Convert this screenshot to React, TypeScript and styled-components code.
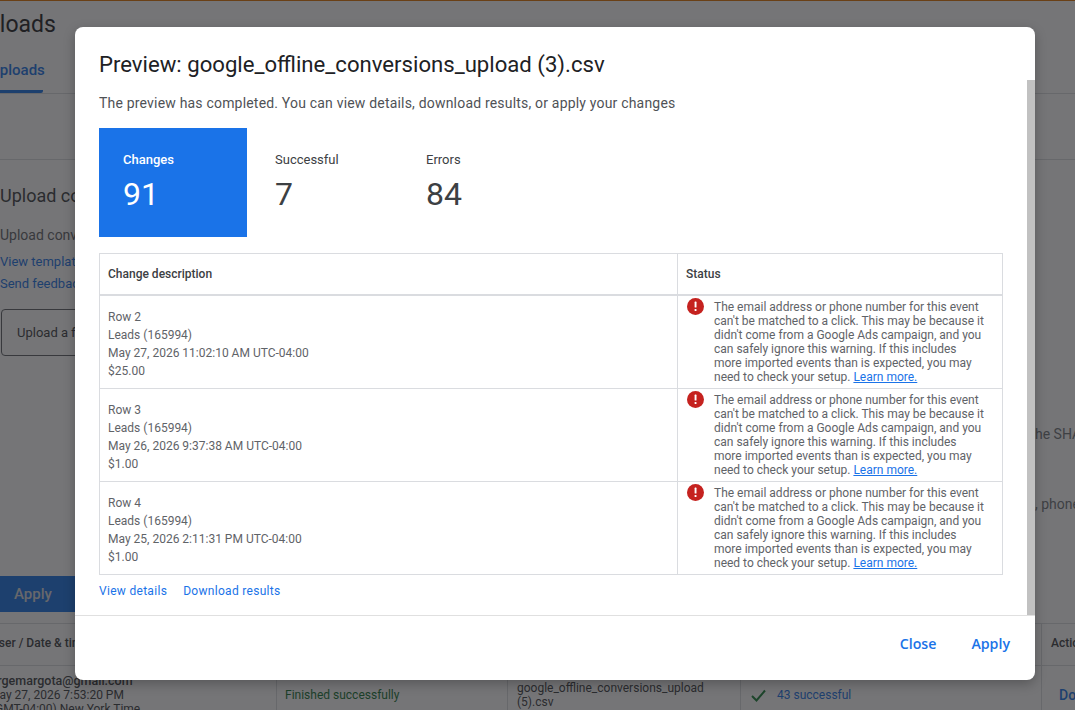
import React from "react";
import styled, { createGlobalStyle } from "styled-components";

const GlobalStyle = createGlobalStyle`
  html, body {
    margin: 0;
    padding: 0;
    height: 710px;
    overflow: hidden;
    background: #fff;
    font-family: Roboto, "Liberation Sans", sans-serif;
    color: #3c4043;
  }
`;

const Page = styled.div`
  position: relative;
  width: 1075px;
  height: 710px;
  overflow: hidden;
  display: flex;
  flex-direction: column;
  background: #fff;
`;

const TopStripe = styled.div`
  height: 1px;
  flex: none;
  background: #e37400;
`;

const PageHeader = styled.div`
  height: 93px;
  flex: none;
  box-sizing: border-box;
  padding-top: 10px;
  border-bottom: 1px solid #dadce0;
  display: flex;
  flex-direction: column;
  overflow: hidden;
`;

const Heading = styled.h1`
  margin: 0 0 0 -28px;
  font-weight: 400;
  font-size: 23px;
  line-height: 28px;
  color: #202124;
`;

const Tab = styled.div`
  margin: 22px 0 0 -10px;
  width: 53px;
  height: 32px;
  flex: none;
  box-sizing: border-box;
  font-size: 15px;
  font-weight: 500;
  line-height: 18px;
  color: #1a73e8;
  border-bottom: 3px solid #1a73e8;
  border-radius: 0 0 2px 0;
  white-space: nowrap;
`;

const SubBar = styled.div`
  height: 66px;
  flex: none;
  box-sizing: border-box;
  border-bottom: 1px solid #dadce0;
`;

const UploadSection = styled.section`
  height: 463px;
  flex: none;
  box-sizing: border-box;
  padding-top: 24px;
  display: flex;
  flex-direction: column;
  position: relative;
`;

const SectionTitle = styled.div`
  font-size: 18px;
  line-height: 24px;
  color: #3c4043;
`;

const SectionText = styled.div`
  font-size: 14px;
  line-height: 20px;
  margin-top: 17px;
  color: #5f6368;
`;

const SideLinks = styled.div`
  margin-top: 6px;
  font-size: 13px;
  line-height: 22px;
  color: #1a73e8;
`;

const UploadBox = styled.div`
  margin: 14px 0 0 1px;
  width: 300px;
  height: 47px;
  flex: none;
  box-sizing: border-box;
  padding: 15px 0 0 15px;
  border: 1px solid #5f6368;
  border-radius: 4px;
  font-size: 13px;
  line-height: 16px;
`;

const CutNote = styled.div<{ $top: number }>`
  position: absolute;
  left: 1035px;
  top: ${(p) => p.$top}px;
  font-size: 14px;
  white-space: nowrap;
  color: #70757a;
`;

const ApplyMain = styled.div`
  margin: 220px 0 0 -4px;
  width: 160px;
  height: 36px;
  flex: none;
  border-radius: 4px;
  background: #1a73e8;
  color: #dadce0;
  font-size: 15px;
  font-weight: 500;
  line-height: 36px;
  box-sizing: border-box;
  padding-left: 18px;
`;

const LogTable = styled.div`
  flex: 1;
  display: grid;
  grid-template-columns: 276px 231px 233px 301px 1fr;
  grid-template-rows: 42px 1fr;
  border-top: 1px solid #dadce0;
  font-size: 12px;
  line-height: 14px;
`;

const HeadCell = styled.div<{ $first?: boolean }>`
  border-bottom: 1px solid #dadce0;
  border-left: ${(p) => (p.$first ? "none" : "1px solid #dadce0")};
  font-weight: 500;
  line-height: 39px;
  padding-left: ${(p) => (p.$first ? "0" : "9px")};
  white-space: nowrap;
  overflow: hidden;
`;

const BodyCell = styled.div<{ $first?: boolean; $pad?: number }>`
  border-left: ${(p) => (p.$first ? "none" : "1px solid #dadce0")};
  padding: 8px 8px 0 ${(p) => p.$pad ?? 9}px;
  display: flex;
  align-items: flex-start;
  gap: 10px;
  min-width: 0;
`;

const UserCell = styled.div`
  margin-left: -9px;
  white-space: nowrap;
  font-size: 12px;
`;

const UserMail = styled.div`
  font-size: 12.5px;
  font-weight: 500;
  margin-left: -13px;
`;

const UserLine = styled.div<{ $shift: number }>`
  margin-left: ${(p) => p.$shift}px;
`;

const GreenText = styled.span`
  color: #137333;
  padding-top: 14px;
  margin-left: -1px;
`;

const FileName = styled.div`
  padding-top: 7px;
`;

const BlueText = styled.span<{ $large?: boolean }>`
  color: #1a73e8;
  padding-top: 14px;
  font-size: ${(p) => (p.$large ? "14px" : "12px")};
  font-weight: ${(p) => (p.$large ? 500 : 400)};
`;

const CheckIcon = styled.svg`
  width: 17px;
  height: 17px;
  flex: none;
  margin-top: 13px;
`;

const Overlay = styled.div`
  position: absolute;
  inset: 0;
  background: rgba(32, 33, 36, 0.62);
  display: flex;
  justify-content: flex-start;
  align-items: flex-start;
  padding: 27px 0 0 75px;
`;

const Modal = styled.div`
  position: relative;
  width: 960px;
  height: 653px;
  background: #fff;
  border-radius: 8px;
  display: flex;
  flex-direction: column;
  overflow: hidden;
  box-shadow: 0 4px 12px rgba(0, 0, 0, 0.25);
`;

const ScrollThumb = styled.div`
  position: absolute;
  right: 0;
  top: 53px;
  width: 8px;
  height: 535px;
  background: #c1c1c1;
`;

const ModalBody = styled.div`
  height: 589px;
  flex: none;
  box-sizing: border-box;
  padding: 23px 32px 0 24px;
  border-bottom: 1px solid #e0e0e0;
`;

const ModalTitle = styled.h2`
  margin: 0;
  font-family: Roboto, sans-serif;
  font-size: 22.15px;
  font-weight: 400;
  line-height: 28px;
  color: #202124;
  white-space: nowrap;
`;

const Lead = styled.p`
  margin: 15px 0 0;
  font-size: 14px;
  line-height: 20px;
  letter-spacing: 0.19px;
  color: #4f5256;
`;

const Stats = styled.div`
  display: flex;
  margin-top: 15px;
`;

const Stat = styled.div<{ $active?: boolean; $width: number }>`
  width: ${(p) => p.$width}px;
  height: 109px;
  box-sizing: border-box;
  padding: 23px 0 0 ${(p) => (p.$active ? 24 : 28)}px;
  background: ${(p) => (p.$active ? "#1a73e8" : "transparent")};
  color: ${(p) => (p.$active ? "#fff" : "#3c4043")};
`;

const StatLabel = styled.div<{ $active?: boolean }>`
  font-size: 13px;
  line-height: 17px;
  font-weight: ${(p) => (p.$active ? 500 : 400)};
`;

const StatValue = styled.div`
  font-size: 32px;
  line-height: 38px;
  margin-top: 7px;
`;

const Table = styled.div`
  margin-top: 16px;
  width: 904px;
  border: 1px solid #dadce0;
  border-bottom: none;
  box-sizing: border-box;
  display: grid;
  grid-template-columns: 577px 1fr;
  font-size: 12px;
`;

const TableHead = styled.div<{ $divider?: boolean }>`
  height: 42px;
  box-sizing: border-box;
  padding-left: 8px;
  line-height: 40px;
  font-weight: 500;
  color: #3c4043;
  border-bottom: 2px solid #dadce0;
  border-left: ${(p) => (p.$divider ? "1px solid #dadce0" : "none")};
`;

const ChangeCell = styled.div`
  height: 93px;
  box-sizing: border-box;
  padding: 12px 8px 0;
  line-height: 18px;
  color: #5f6368;
  border-bottom: 1px solid #dadce0;
`;

const StatusCell = styled.div`
  height: 93px;
  box-sizing: border-box;
  padding: 4px 8px 0;
  display: flex;
  gap: 9px;
  line-height: 14px;
  color: #5f6368;
  border-left: 1px solid #dadce0;
  border-bottom: 1px solid #dadce0;
`;

const ErrorIcon = styled.svg`
  width: 19px;
  height: 19px;
  flex: none;
  margin-top: -3px;
`;

const StatusText = styled.div`
  width: 271px;
`;

const InlineLink = styled.a`
  color: #1a73e8;
  text-decoration: underline;
`;

const TableLinks = styled.div`
  display: flex;
  gap: 16px;
  margin-top: 8px;
`;

const TextLink = styled.a`
  font-size: 12px;
  line-height: 16px;
  letter-spacing: 0.3px;
  color: #1a73e8;
`;

const ModalFooter = styled.div`
  flex: 1;
  display: flex;
  justify-content: flex-end;
  align-items: center;
  gap: 35px;
  padding: 0 25px 9px 0;
`;

const FooterButton = styled.button`
  border: none;
  background: none;
  padding: 0;
  font-family: "Open Sans", Roboto, sans-serif;
  font-size: 14.2px;
  font-weight: 600;
  color: #1a73e8;
`;

const rows = [
  { row: "Row 2", when: "May 27, 2026 11:02:10 AM UTC-04:00", value: "$25.00" },
  { row: "Row 3", when: "May 26, 2026 9:37:38 AM UTC-04:00", value: "$1.00" },
  { row: "Row 4", when: "May 25, 2026 2:11:31 PM UTC-04:00", value: "$1.00" },
];

const stats = [
  { label: "Changes", value: "91", width: 148, active: true },
  { label: "Successful", value: "7", width: 151, active: false },
  { label: "Errors", value: "84", width: 150, active: false },
];

export default function App() {
  return (
    <Page>
      <GlobalStyle />
      <TopStripe />
      <PageHeader>
        <Heading>Uploads</Heading>
        <Tab>Uploads</Tab>
      </PageHeader>
      <SubBar />
      <UploadSection>
        <SectionTitle>Upload conversions</SectionTitle>
        <SectionText>Upload conversions</SectionText>
        <SideLinks>
          View template
          <br />
          Send feedback
        </SideLinks>
        <UploadBox>Upload a file</UploadBox>
        <ApplyMain>Apply</ApplyMain>
        <CutNote $top={266}>he SHA</CutNote>
        <CutNote $top={336}>, phone</CutNote>
      </UploadSection>
      <LogTable>
        <HeadCell $first>
          <UserLine $shift={-9}>User / Date &amp; time</UserLine>
        </HeadCell>
        <HeadCell>Status</HeadCell>
        <HeadCell>File</HeadCell>
        <HeadCell>Results</HeadCell>
        <HeadCell>Action</HeadCell>
        <BodyCell $first>
          <UserCell>
            <UserMail>jorgemargota@gmail.com</UserMail>
            <UserLine $shift={-11}>May 27, 2026 7:53:20 PM</UserLine>
            <UserLine $shift={-9}>(GMT-04:00) New York Time</UserLine>
          </UserCell>
        </BodyCell>
        <BodyCell>
          <GreenText>Finished successfully</GreenText>
        </BodyCell>
        <BodyCell>
          <FileName>
            google_offline_conversions_upload
            <br />
            (5).csv
          </FileName>
        </BodyCell>
        <BodyCell>
          <CheckIcon viewBox="0 0 17 17">
            <path d="M2 9l4.5 4.5L15 3.5" fill="none" stroke="#188038" strokeWidth="2" />
          </CheckIcon>
          <BlueText>43 successful</BlueText>
        </BodyCell>
        <BodyCell $pad={17}>
          <BlueText $large>Download</BlueText>
        </BodyCell>
      </LogTable>

      <Overlay>
        <Modal>
          <ModalBody>
            <ModalTitle>Preview: google_offline_conversions_upload (3).csv</ModalTitle>
            <Lead>The preview has completed. You can view details, download results, or apply your changes</Lead>
            <Stats>
              {stats.map((s) => (
                <Stat key={s.label} $active={s.active} $width={s.width}>
                  <StatLabel $active={s.active}>{s.label}</StatLabel>
                  <StatValue>{s.value}</StatValue>
                </Stat>
              ))}
            </Stats>
            <Table>
              <TableHead>Change description</TableHead>
              <TableHead $divider>Status</TableHead>
              {rows.map((r) => (
                <React.Fragment key={r.row}>
                  <ChangeCell>
                    {r.row}
                    <br />
                    Leads (165994)
                    <br />
                    {r.when}
                    <br />
                    {r.value}
                  </ChangeCell>
                  <StatusCell>
                    <ErrorIcon viewBox="0 0 19 19">
                      <circle cx="9.5" cy="9.5" r="8.5" fill="#c5221f" />
                      <rect x="8.6" y="4.6" width="1.9" height="6" rx="0.6" fill="#fff" />
                      <rect x="8.6" y="12" width="1.9" height="2" rx="0.6" fill="#fff" />
                    </ErrorIcon>
                    <StatusText>
                      The email address or phone number for this event can't be matched to a click. This may be
                      because it didn't come from a Google Ads campaign, and you can safely ignore this warning. If
                      this includes more imported events than is expected, you may need to check your setup.{" "}
                      <InlineLink>Learn more.</InlineLink>
                    </StatusText>
                  </StatusCell>
                </React.Fragment>
              ))}
            </Table>
            <TableLinks>
              <TextLink>View details</TextLink>
              <TextLink>Download results</TextLink>
            </TableLinks>
          </ModalBody>
          <ModalFooter>
            <FooterButton>Close</FooterButton>
            <FooterButton>Apply</FooterButton>
          </ModalFooter>
          <ScrollThumb />
        </Modal>
      </Overlay>
    </Page>
  );
}
